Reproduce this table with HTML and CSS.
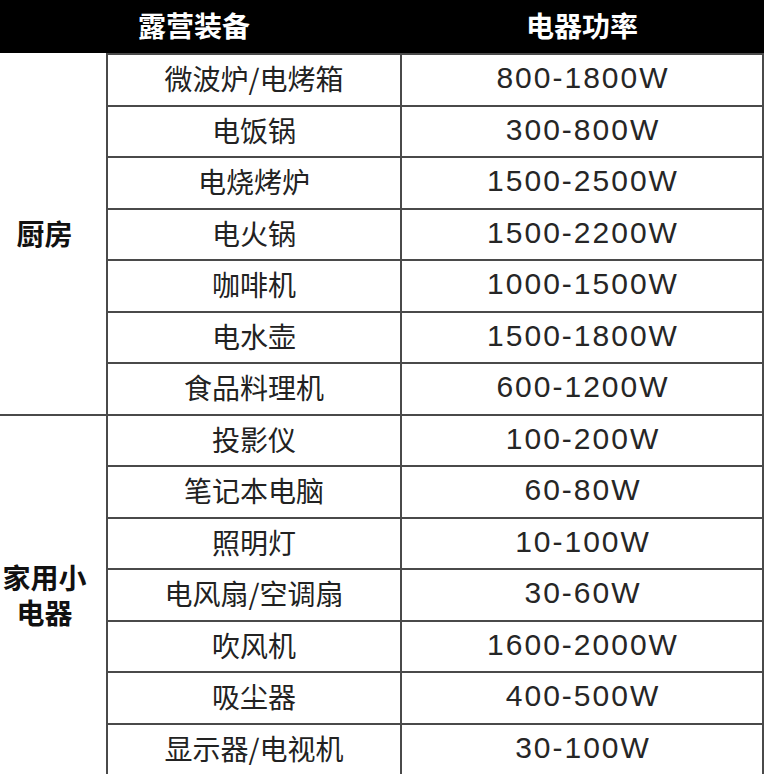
FILE: index.html
```html
<!DOCTYPE html>
<html lang="zh-CN">
<head>
<meta charset="utf-8">
<title>露营装备 电器功率</title>
<link rel="stylesheet" href="styles.css">
</head>
<body>
<div class="table">
  <div class="head head-item">露营装备</div>
  <div class="head head-power">电器功率</div>

  <div class="cat cat-kitchen">厨房</div>
  <div class="item">微波炉/电烤箱</div><div class="power">800-1800W</div>
  <div class="item">电饭锅</div><div class="power">300-800W</div>
  <div class="item">电烧烤炉</div><div class="power">1500-2500W</div>
  <div class="item">电火锅</div><div class="power">1500-2200W</div>
  <div class="item">咖啡机</div><div class="power">1000-1500W</div>
  <div class="item">电水壶</div><div class="power">1500-1800W</div>
  <div class="item">食品料理机</div><div class="power">600-1200W</div>

  <div class="cat cat-home">家用小电器</div>
  <div class="item">投影仪</div><div class="power">100-200W</div>
  <div class="item">笔记本电脑</div><div class="power">60-80W</div>
  <div class="item">照明灯</div><div class="power">10-100W</div>
  <div class="item">电风扇/空调扇</div><div class="power">30-60W</div>
  <div class="item">吹风机</div><div class="power">1600-2000W</div>
  <div class="item">吸尘器</div><div class="power">400-500W</div>
  <div class="item">显示器/电视机</div><div class="power">30-100W</div>
</div>
</body>
</html>
```

FILE: styles.css
```css
html, body {
  margin: 0;
  padding: 0;
  background: #ffffff;
}

body {
  font-family: "Noto Sans CJK SC", "Noto Sans", sans-serif;
  color: #222222;
  overflow: hidden;
}

.table {
  display: grid;
  width: 764px;
  grid-template-columns: 106px 294px 364px;
  grid-template-rows: 53px repeat(14, 51.5px);
}

.head {
  background: #000000;
  color: #ffffff;
  font-weight: 700;
  font-size: 28px;
  display: flex;
  align-items: center;
  justify-content: center;
  padding-bottom: 3px;
  box-sizing: border-box;
}

.head-item {
  grid-column: 1 / 3;
  padding-right: 12px;
}

.cat {
  grid-column: 1;
  border-top: 2px solid #4a4a4a;
  box-sizing: border-box;
  display: flex;
  align-items: center;
  justify-content: center;
  text-align: center;
  padding-right: 17px;
  font-weight: 700;
  font-size: 28px;
  line-height: 35px;
  color: #111111;
}

.cat-kitchen {
  grid-row: 2 / span 7;
  border-top: none;
}

.cat-home {
  grid-row: 9 / span 7;
}

.item,
.power {
  border-top: 2px solid #4a4a4a;
  border-left: 2px solid #4a4a4a;
  box-sizing: border-box;
  display: flex;
  align-items: center;
  justify-content: center;
  line-height: 1;
  padding-bottom: 3px;
}

.item {
  grid-column: 2;
  font-size: 28px;
}

.power {
  grid-column: 3;
  border-right: 2px solid #4a4a4a;
  font-family: "Liberation Sans", "Noto Sans CJK SC", sans-serif;
  font-size: 30px;
  letter-spacing: 2px;
  color: #262626;
  padding-left: 2px;
}
```
